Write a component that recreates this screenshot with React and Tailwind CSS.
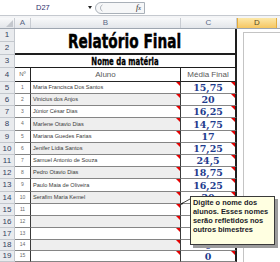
import React from 'react';

const students = [
  ['Maria Francisca Dos Santos', '15,75'],
  ['Vinicius dos Anjos', '20'],
  ['Júnior César Dias', '16,25'],
  ['Marlene Otavio Dias', '14,75'],
  ['Mariana Guedes Farias', '17'],
  ['Jenifer Lídia Santos', '17,25'],
  ['Samuel Antonio de Souza', '24,5'],
  ['Pedro Otavio Dias', '18,75'],
  ['Paulo Maia de Oliveira', '16,25'],
  ['Serafim Maria Kemel', '20'],
  ['', '0'],
  ['', '0'],
  ['', '0'],
  ['', '0'],
  ['', '0'],
];

const heights = [12, 12, 12, 13, 12, 12, 12, 12, 13, 12, 12, 12, 12, 11, 11];
const H = { 11: 'h-[11px]', 12: 'h-[12px]', 13: 'h-[13px]', 14: 'h-[14px]' };

function RowHead({ n, h = 12 }) {
  return (
    <div className={`flex w-[15px] shrink-0 items-center justify-center border-r border-b border-[#c3c7cd] bg-[#e9ebee] text-[8px] text-[#34425e] ${H[h]}`}>
      {n}
    </div>
  );
}

function Flag() {
  return <span className="absolute right-0 top-0 h-0 w-0 border-l-[4px] border-t-[4px] border-l-transparent border-t-[#e40000]" />;
}

function FormulaBar() {
  return (
    <div className="flex h-[16px] border-b border-[#c5c9cf] bg-white">
      <div className="flex w-[95px] items-center pl-[36px] text-[7.5px] text-[#2e2e6e]">
        D27
        <svg className="ml-auto mr-[3px]" width="4" height="3" viewBox="0 0 4 3">
          <path d="M0 0h4L2 3z" fill="#222" />
        </svg>
      </div>
      <div className="mt-[2px] flex h-[12px] w-[50px] items-center justify-between rounded-l-full border border-[#a9b0b8] bg-[#f6f7f8] pl-[2px] pr-[3px]">
        <svg width="6" height="8" viewBox="0 0 6 8">
          <path d="M4.5 0.8A3.5 3.5 0 0 0 4.5 7.2" fill="none" stroke="#b5bac1" strokeWidth="1" />
        </svg>
        <span className="font-['Liberation_Serif',serif] text-[8px] italic leading-none text-[#222]">
          f<span className="text-[6px]">x</span>
        </span>
      </div>
      <div className="flex-1 bg-white" />
    </div>
  );
}

function ColumnHeader() {
  const cell = 'flex h-full items-center justify-center border-r border-[#c8ccd2] text-[8px] text-[#5b6884]';
  return (
    <div className="flex h-[11px] border-b border-[#9ea6b0] bg-linear-to-b from-[#f8f9fa] to-[#e3e6ea]">
      <div className={`${cell} relative w-[15px]`}>
        <svg className="absolute bottom-[1px] right-[1px]" width="7" height="7" viewBox="0 0 7 7">
          <path d="M7 0V7H0z" fill="#c3c7cd" />
        </svg>
      </div>
      <div className={`${cell} w-[16px]`}>A</div>
      <div className={`${cell} w-[150px]`}>B</div>
      <div className={`${cell} w-[56px]`}>C</div>
      <div className="flex h-full w-[40px] items-center justify-center border-x border-[#e3ad3f] bg-linear-to-b from-[#fce8a8] to-[#f5c660] text-[8px] text-[#5a4a20]">
        D
      </div>
    </div>
  );
}

export default function App() {
  return (
    <div className="relative h-[262px] w-[280px] overflow-hidden bg-white font-['Liberation_Sans',Arial,sans-serif]">
      <FormulaBar />
      <div className="h-[2px] bg-[#f3f4f6]" />
      <ColumnHeader />

      <div className="flex">
        <div className="flex w-[237px] flex-col">
          <div className="flex h-[26px]">
            <div className="flex flex-col">
              <RowHead n={1} h={13} />
              <RowHead n={2} h={13} />
            </div>
            <div className="flex w-[222px] items-center justify-center border-r-2 border-b-2 border-[#1e1e1e]">
              <span className="inline-block scale-x-[0.685] font-['DejaVu_Sans',sans-serif] text-[20px] font-bold leading-none text-black [-webkit-text-stroke:0.5px_black]">
                Relatório Final
              </span>
            </div>
          </div>

          <div className="flex h-[13px]">
            <RowHead n={3} h={13} />
            <div className="flex w-[222px] items-center justify-center border-r-2 border-b border-[#1e1e1e]">
              <span className="inline-block scale-x-[0.66] font-['DejaVu_Sans',sans-serif] text-[10.5px] font-bold leading-none text-black [-webkit-text-stroke:0.3px_black]">
                Nome da matéria
              </span>
            </div>
          </div>

          <div className="flex h-[14px] text-[8px] text-[#595959]">
            <RowHead n={4} h={14} />
            <div className="flex w-[16px] items-center justify-center border-r border-b border-[#262626] text-[6px]">Nº</div>
            <div className="flex w-[150px] items-center justify-center border-r border-b border-[#262626]">Aluno</div>
            <div className="flex w-[56px] items-center justify-center border-r-2 border-b border-[#262626]">Média Final</div>
          </div>

          {students.map(([name, media], i) => {
            const n = i + 5;
            return (
              <div key={n} className={`flex ${H[heights[i]]}`}>
                <RowHead n={n} h={heights[i]} />
                <div className="flex w-[16px] items-center justify-center border-r border-r-[#3a3a3a] border-b border-b-[#858585] text-[5px] text-[#6a6a6a]">
                  {i + 1}
                </div>
                <div className={`relative flex w-[150px] items-center border-r border-r-[#3a3a3a] border-b border-b-[#858585] pl-[2px] text-[5.6px] text-[#3a3a3a] ${n % 2 === 0 ? 'bg-[#eeeeee]' : 'bg-white'}`}>
                  {name}
                  <Flag />
                </div>
                <div className="relative flex w-[56px] items-center justify-center border-r-2 border-r-[#1e1e1e] border-b border-b-[#858585] pt-[1px] font-['DejaVu_Serif',serif] text-[9.5px] font-bold leading-none text-[#1f3c8e]">
                  {media}
                  <Flag />
                </div>
              </div>
            );
          })}
        </div>

        <div className="flex-1 pl-[6px] pt-[3px]">
          <div className="h-full border-l border-t border-[#c4c4c4]" />
        </div>
      </div>

      <svg className="absolute left-[179px] top-[196px]" width="14" height="10" viewBox="0 0 14 10">
        <line x1="2" y1="8" x2="11" y2="3" stroke="#111" strokeWidth="0.8" />
        <path d="M1.5 8.5L4.2 6.2L3.4 8.6z" fill="#111" />
      </svg>
      <div className="absolute left-[190px] top-[196px] h-[49px] w-[85px] border border-[#3a3a3a] bg-[#ffffe1] px-[2px] py-[0.5px] text-[7.4px] font-bold leading-[9.3px] text-[#1c1c2a] shadow-[3px_3px_0_0_#9c9c9c]">
        Digite o nome dos
        <br />
        alunos. Esses nomes
        <br />
        serão refletidos nos
        <br />
        outros bimestres
      </div>
    </div>
  );
}
